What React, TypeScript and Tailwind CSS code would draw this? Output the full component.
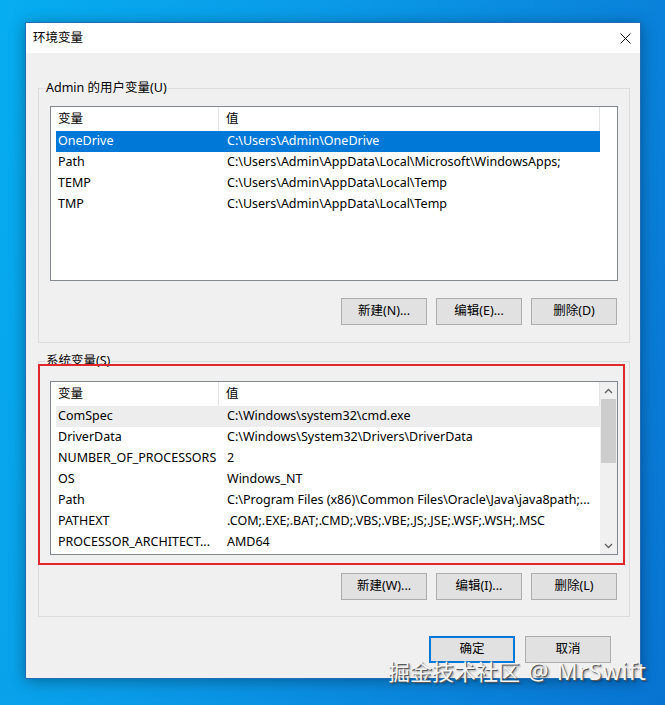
import React from "react";

type Row = { name: string; value: string; state?: "sel" | "soft" };

const userRows: Row[] = [
  { name: "OneDrive", value: "C:\\Users\\Admin\\OneDrive", state: "sel" },
  { name: "Path", value: "C:\\Users\\Admin\\AppData\\Local\\Microsoft\\WindowsApps;" },
  { name: "TEMP", value: "C:\\Users\\Admin\\AppData\\Local\\Temp" },
  { name: "TMP", value: "C:\\Users\\Admin\\AppData\\Local\\Temp" },
];

const sysRows: Row[] = [
  { name: "ComSpec", value: "C:\\Windows\\system32\\cmd.exe", state: "soft" },
  { name: "DriverData", value: "C:\\Windows\\System32\\Drivers\\DriverData" },
  { name: "NUMBER_OF_PROCESSORS", value: "2" },
  { name: "OS", value: "Windows_NT" },
  { name: "Path", value: "C:\\Program Files (x86)\\Common Files\\Oracle\\Java\\java8path;..." },
  { name: "PATHEXT", value: ".COM;.EXE;.BAT;.CMD;.VBS;.VBE;.JS;.JSE;.WSF;.WSH;.MSC" },
  { name: "PROCESSOR_ARCHITECT...", value: "AMD64" },
];

function Chevron({ up }: { up: boolean }) {
  return (
    <svg width="9" height="6" viewBox="0 0 9 6">
      <polyline
        points={up ? "1,5 4.5,1.5 8,5" : "1,1 4.5,4.5 8,1"}
        fill="none"
        stroke="#606060"
        strokeWidth="1.3"
      />
    </svg>
  );
}

function ListBox({ rows, height, scroll }: { rows: Row[]; height: string; scroll: boolean }) {
  return (
    <div className={`flex border border-[#828790] bg-white ${height}`}>
      <div className="flex-1 flex flex-col pl-[5px] overflow-hidden">
        <div className="flex h-[24px] shrink-0 border-r border-[#e5e5e5]">
          <div className="w-[163px] pl-[2px] flex items-center border-r border-[#e5e5e5]">变量</div>
          <div className="flex-1 pl-[7px] flex items-center">值</div>
        </div>
        {rows.map((r, i) => (
          <div
            key={i}
            className={`grid grid-cols-[169px_1fr] items-center h-[21px] shrink-0 ${
              r.state === "sel" ? "bg-[#0078d7] text-white" : r.state === "soft" ? "bg-[#ededed]" : ""
            }`}
          >
            <span className="pl-[2px] whitespace-nowrap overflow-hidden">{r.name}</span>
            <span className="pl-[2px] whitespace-nowrap overflow-hidden">{r.value}</span>
          </div>
        ))}
      </div>
      {scroll ? (
        <div className="w-[17px] bg-[#f0f0f0] flex flex-col">
          <div className="h-[17px] flex items-center justify-center">
            <Chevron up />
          </div>
          <div className="h-[64px] bg-[#cdcdcd] mx-[1px]" />
          <div className="flex-1" />
          <div className="h-[17px] flex items-center justify-center">
            <Chevron up={false} />
          </div>
        </div>
      ) : (
        <div className="w-[17px]" />
      )}
    </div>
  );
}

function Btn({ children, primary }: { children: React.ReactNode; primary?: boolean }) {
  return (
    <div
      className={`w-[86px] h-[27px] flex items-center justify-center bg-[#e1e1e1] ${
        primary ? "border-2 border-[#0078d7]" : "border border-[#adadad]"
      }`}
    >
      {children}
    </div>
  );
}

function Group({
  label,
  rows,
  listH,
  groupH,
  pt,
  mt,
  btnMt,
  scroll,
  btns,
}: {
  label: string;
  rows: Row[];
  listH: string;
  groupH: string;
  pt: string;
  mt: string;
  btnMt: string;
  scroll: boolean;
  btns: string[];
}) {
  return (
    <div className={`relative border border-[#dcdcdc] px-[11px] ${groupH} ${pt} ${mt}`}>
      <span className="absolute -top-[9px] left-[6px] px-[1px] bg-[#f0f0f0] leading-[16px]">{label}</span>
      <ListBox rows={rows} height={listH} scroll={scroll} />
      <div className={`flex justify-end gap-[9px] pr-[1px] ${btnMt}`}>
        {btns.map((b) => (
          <Btn key={b}>{b}</Btn>
        ))}
      </div>
    </div>
  );
}

export default function App() {
  return (
    <div className="relative w-[665px] h-[705px] overflow-hidden bg-[linear-gradient(105deg,#06adf0_0%,#0a9ce8_35%,#0a86dd_70%,#0874d2_100%)] font-['Noto_Sans','Noto_Sans_CJK_SC',sans-serif] text-[12.5px] text-black">
      <div className="pt-[22px] pl-[25px]">
        <div className="w-[616px] h-[657px] flex flex-col bg-[#f0f0f0] border border-[#1f6cb5] shadow-[0_2px_14px_rgba(0,0,0,0.35)]">
          <div className="h-[30px] shrink-0 bg-white flex items-center justify-between pl-[7px] pr-[9px]">
            <span>环境变量</span>
            <svg width="11" height="11" viewBox="0 0 11 11">
              <line x1="0.5" y1="0.5" x2="10.5" y2="10.5" stroke="#111" strokeWidth="1" />
              <line x1="10.5" y1="0.5" x2="0.5" y2="10.5" stroke="#111" strokeWidth="1" />
            </svg>
          </div>
          <div className="flex-1 flex flex-col pl-[12px] pr-[10px]">
            <Group
              label="Admin 的用户变量(U)"
              rows={userRows}
              listH="h-[175px]"
              groupH="h-[255px]"
              pt="pt-[17px]"
              mt="mt-[35px]"
              btnMt="mt-[17px]"
              scroll={false}
              btns={["新建(N)...", "编辑(E)...", "删除(D)"]}
            />
            <Group
              label="系统变量(S)"
              rows={sysRows}
              listH="h-[174px]"
              groupH="h-[256px]"
              pt="pt-[19px]"
              mt="mt-[18px]"
              btnMt="mt-[18px]"
              scroll
              btns={["新建(W)...", "编辑(I)...", "删除(L)"]}
            />
            <div className="flex justify-end gap-[10px] pr-[19px] mt-[19px]">
              <Btn primary>确定</Btn>
              <Btn>取消</Btn>
            </div>
          </div>
        </div>
      </div>
      <div className="absolute left-[38px] top-[364px] w-[587px] h-[201px] border-2 border-[#e0272b]" />
      <div className="absolute left-[388px] top-[657px] text-[22px] leading-[28px] text-[#f4f4f4] whitespace-nowrap font-['Noto_Sans','Noto_Sans_CJK_SC',sans-serif] [text-shadow:1px_1px_0_#5a5a5a,2px_2px_2px_rgba(0,0,0,0.35)]">
        掘金技术社区<span className="ml-[8px] text-[23px] tracking-[1px]">@ MrSwift</span>
      </div>
    </div>
  );
}
